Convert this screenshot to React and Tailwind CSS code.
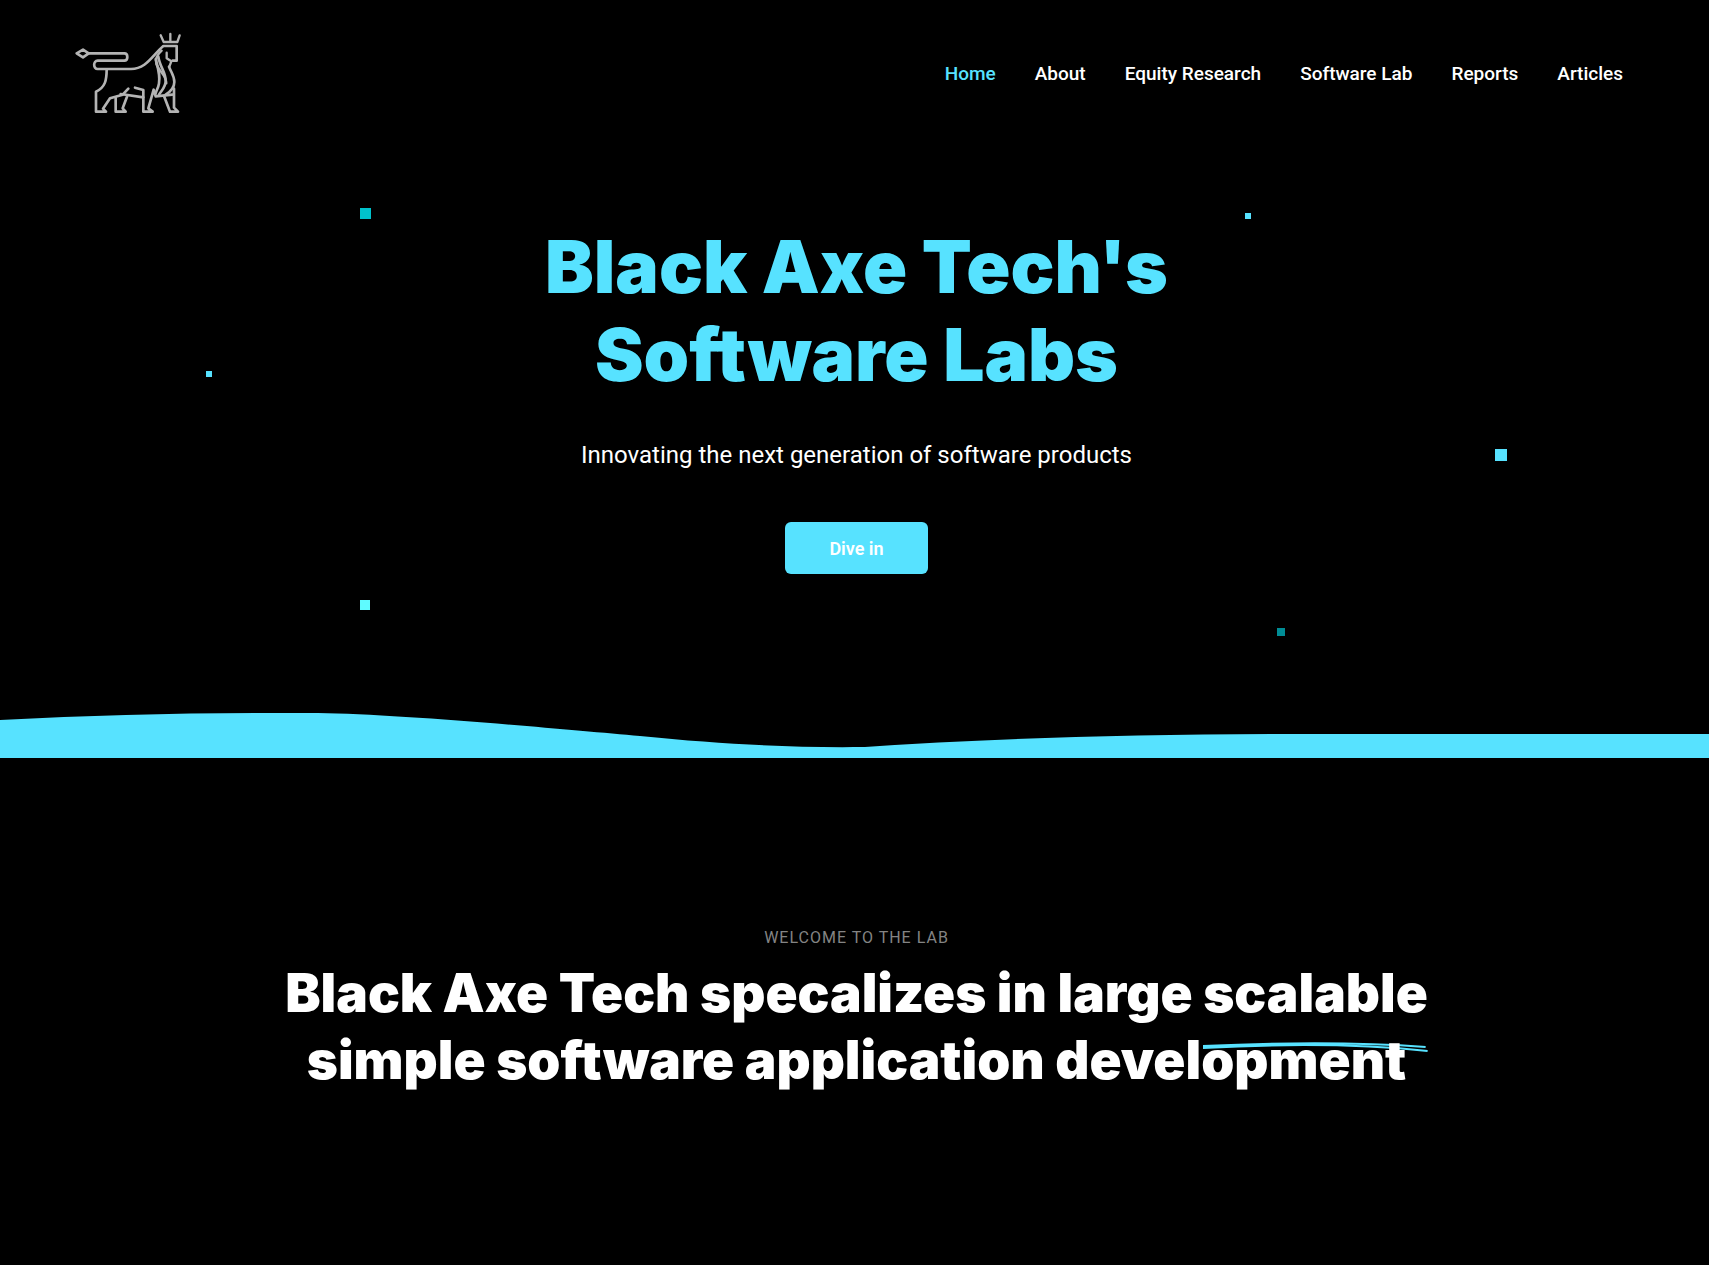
const NAV = ["Home", "About", "Equity Research", "Software Lab", "Reports", "Articles"];

function Logo() {
  return (
    <svg viewBox="0 0 390 315" className="h-[105px] w-[130px]" fill="none" stroke="#b4b4b4" strokeWidth="8" strokeLinejoin="round" strokeLinecap="round" role="img" aria-label="Black Axe Tech">
      <path d="M35 100l19-11 17 11-17 12z" />
      <path d="M72 100h106c12 0 12 22 0 22H98c-14 0-14 25 0 25h100c45 0 62-38 97-69h40v44h-12" />
      <path d="M296 66l-9-20M296 66h41l7-20M316 64V42" strokeWidth="7" />
      <path d="M125 148c0 32-4 54-32 67v60h30l-9-9 21-31 38-11 17-18" />
      <path d="M152 234v41h30l-9-10 13-35M167 222l68 10" />
      <path d="M210 203l25 7v65h28l-13-10 16-56 6 20 50-5" />
      <path d="M297 228l18 47h24l-12-12V206" />
      <path d="M272 118c8 30 14 48 10 72-2 14-8 20-10 30M280 110c4 30 22 46 22 72 0 20-12 28-20 42M312 140c8 20 16 28 16 46 0 18-10 28-26 38" />
      <path d="M290 92c-14 12-20 24-16 40 8 22 30 34 30 58" strokeWidth="7" />
      <path d="M305 98v17l14 9-6 16" strokeWidth="7" />
    </svg>
  );
}

function Header() {
  return (
    <header className="flex items-center justify-between pt-5 pr-[86px] pl-[65px]">
      <a href="#home"><Logo /></a>
      <nav className="flex gap-[39px] pt-[2px] font-['Roboto'] text-[19px] leading-6 font-medium text-white">
        {NAV.map((label, i) => (
          <a key={label} href={"#" + label.toLowerCase().replace(" ", "-")} className={i === 0 ? "text-[#57e2ff]" : ""}>
            {label}
          </a>
        ))}
      </nav>
    </header>
  );
}

function Squares() {
  return (
    <div aria-hidden="true">
      <span className="absolute top-[208px] left-[360px] size-[11px] bg-[#00c2cb]" />
      <span className="absolute top-[213px] left-[1245px] size-[6px] bg-[#57e2ff]" />
      <span className="absolute top-[371px] left-[206px] size-[6px] bg-[#57e2ff]" />
      <span className="absolute top-[449px] left-[1495px] size-[12px] bg-[#57e2ff]" />
      <span className="absolute top-[600px] left-[360px] size-[10px] bg-[#5ffbff]" />
      <span className="absolute top-[628px] left-[1277px] size-[8px] bg-[#008c95]" />
    </div>
  );
}

export default function App() {
  return (
    <div className="min-h-screen bg-black text-white">
      <section className="relative">
        <Squares />
        <Header />
        <div className="flex flex-col items-center pt-[98px] pl-1 text-center">
          <h1 className="font-['Inter'] text-[73px] leading-[88px] font-black text-[#57e2ff]">
            Black Axe Tech's
            <br />
            Software Labs
          </h1>
          <p className="mt-[38px] font-['Roboto'] text-[24px] leading-[36px]">Innovating the next generation of software products</p>
          <button className="mt-[49px] h-[52px] rounded-[6px] bg-[#57e2ff] px-[44px] font-['Roboto'] text-[18px] font-semibold">Dive in</button>
        </div>
        <svg viewBox="0 0 1709 46" preserveAspectRatio="none" className="mt-[138px] block h-[46px] w-full" aria-hidden="true">
          <path fill="#57e2ff" d="M0 8Q130 1 270 1H318C400 2 560 17 640 24C720 32 790 36 865 35Q1050 22 1320 22H1709V46H0z" />
        </svg>
      </section>
      <section className="flex flex-col items-center pt-[168px] pr-6 pb-[140px] pl-[28px] text-center">
        <p className="font-['Roboto'] text-[16px] leading-6 tracking-[1px] text-[#848484] uppercase">Welcome to the lab</p>
        <h2 className="mt-[10px] font-['Inter'] text-[53px] leading-[67px] font-black">
          Black Axe Tech specalizes in large{" "}
          <span className="relative inline-block">
            scalable
            <svg viewBox="0 0 226 12" preserveAspectRatio="none" className="absolute top-[82px] left-0 h-3 w-full overflow-visible" fill="none" stroke="#57e2ff" strokeWidth="2" aria-hidden="true">
              <path d="M0 4Q130-2 224 5M0 6Q130-1 226 9" />
            </svg>
          </span>
          <br />
          <span className="relative">simple software application development</span>
        </h2>
      </section>
    </div>
  );
}
